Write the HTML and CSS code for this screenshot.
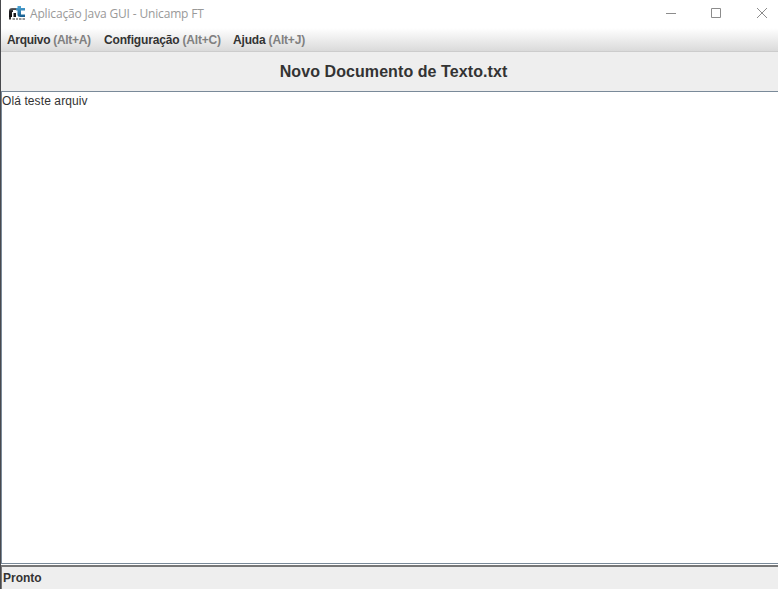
FILE: index.html
```html
<!DOCTYPE html>
<html lang="pt-BR">
<head>
<meta charset="utf-8">
<title>Aplicação Java GUI - Unicamp FT</title>
<link rel="stylesheet" href="styles.css">
</head>
<body>
<div class="window">
  <header class="titlebar">
    <svg class="app-icon" width="17" height="16" viewBox="0 0 17 16">
      <defs>
        <linearGradient id="f" x1="0" y1="0" x2="0" y2="1"><stop offset="0" stop-color="#66666a"/><stop offset=".4" stop-color="#222225"/><stop offset="1" stop-color="#101012"/></linearGradient>
        <linearGradient id="t" x1="0" y1="0" x2="0" y2="1"><stop offset="0" stop-color="#4fa6d6"/><stop offset="1" stop-color="#145b8c"/></linearGradient>
      </defs>
      <path fill="url(#f)" d="M0 11V5Q0 2 3 2H7V4H4V6H3V11ZM4.500 7H7V11H4.500Z"/>
      <path fill="url(#t)" d="M8.500 0H12V2H16V4.500H12V8.500H16V11H11.500Q8.500 11 8.500 8.500V4.500H7V2H8.500Z"/>
      <path fill="#333" d="M0 11H2V13.500H0ZM3.500 12.500H6V13.500H3.500ZM7 12.500H9V13.500H7ZM10 12.500H12.500V13.500H10ZM13.500 12.500H16V13.500H13.500Z"/>
    </svg>
    <span class="title">Aplicação Java GUI - Unicamp FT</span>
    <svg class="controls" width="102" height="12" viewBox="0 0 102 12" fill="none" stroke="#8c8c8c">
      <path d="M0 6.500H10"/>
      <path d="M45.500 1.500H54.500V10.500H45.500Z"/>
      <path d="M91 1L101 11M101 1L91 11"/>
    </svg>
  </header>
  <nav class="menubar">
    <span class="menu arquivo">Arquivo <span class="key">(Alt+A)</span></span>
    <span class="menu config">Configuração <span class="key">(Alt+C)</span></span>
    <span class="menu ajuda">Ajuda <span class="key">(Alt+J)</span></span>
  </nav>
  <h1 class="filename">Novo Documento de Texto.txt</h1>
  <main class="editor">Olá teste arquiv</main>
  <footer class="status">Pronto</footer>
</div>
</body>
</html>
```
FILE: styles.css
```css
* { box-sizing: border-box; }
body { margin: 0; background: #fff; overflow: hidden; }
.window {
  width: 778px;
  height: 589px;
  display: flex;
  flex-direction: column;
  border-left: 1px solid #48494d;
  font-family: "Liberation Sans", Arial, sans-serif;
  font-size: 12px;
  color: #333;
}
.titlebar {
  height: 28px;
  flex: none;
  display: flex;
  align-items: center;
  padding: 0 10px 2px 8px;
}
.app-icon { margin: 2px 4px 0 0; }
.title {
  font-family: "Open Sans", "Noto Sans", sans-serif;
  font-size: 12px;
  line-height: 16px;
  letter-spacing: -0.16px;
  padding-top: 2px;
  color: #999;
  white-space: nowrap;
}
.controls { margin-left: auto; }
.menubar {
  height: 24px;
  flex: none;
  display: flex;
  padding-left: 6px;
  line-height: 24px;
  font-weight: bold;
  white-space: nowrap;
  background: linear-gradient(#fff, #dadada);
  border-bottom: 1px solid #ccc;
}
.arquivo { width: 97px; letter-spacing: -0.31px; }
.config { width: 129px; letter-spacing: -0.17px; }
.ajuda { letter-spacing: -0.18px; }
.key { color: #808080; }
.filename {
  height: 39px;
  flex: none;
  margin: 0;
  padding-left: 8px;
  line-height: 39px;
  font-size: 16px;
  letter-spacing: 0.08px;
  text-align: center;
  background: #eee;
}
.editor {
  flex: 1;
  border: 1px solid #7a8a99;
  border-right: 0;
  line-height: 14px;
  letter-spacing: 0.1px;
  padding-top: 2px;
}
.status {
  height: 24px;
  flex: none;
  margin-top: 1px;
  border-top: 2px solid #777;
  border-left: 1px solid #777;
  padding-left: 1px;
  line-height: 22px;
  font-weight: bold;
  background: #eee;
}
```
